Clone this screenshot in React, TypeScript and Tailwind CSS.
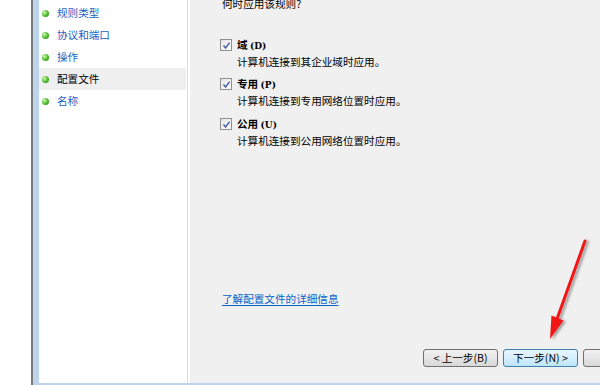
import React from 'react';

const cjk = "font-['Noto_Sans_CJK_SC',sans-serif]";

interface NavItemProps {
  label: string;
  active?: boolean;
}

const NavItem: React.FC<NavItemProps> = ({ label, active }) => {
  return (
    <div
      className={`flex h-[22px] items-center pl-[3px] mr-px ${
        active ? 'bg-[#efefef] text-black' : 'text-[#1c5fc4]'
      }`}
    >
      <span className="h-[7px] w-[7px] shrink-0 rounded-full bg-[radial-gradient(circle_at_35%_35%,#d4f8b0,#47b829_55%,#2e8c18)]" />
      <span className="ml-[8px] text-[10.6px] leading-none">{label}</span>
    </div>
  );
};

const CheckBox: React.FC = () => (
  <span className="flex h-[12px] w-[12px] shrink-0 items-center justify-center border border-[#8e8f8f] bg-gradient-to-br from-[#e4e4e4] to-[#ffffff]">
    <svg width="9" height="9" viewBox="0 0 9 9">
      <path d="M1.5 4.6 L3.6 7 L7.6 1.6" fill="none" stroke="#4d61a6" strokeWidth="1.5" />
    </svg>
  </span>
);

interface ProfileOptionProps {
  title: string;
  hint: string;
  desc: string;
  className?: string;
}

const ProfileOption: React.FC<ProfileOptionProps> = ({ title, hint, desc, className }) => (
  <div className={className}>
    <div className="flex h-[14px] items-center">
      <CheckBox />
      <span className="ml-[5px] text-[10.6px] font-bold leading-none">
        {title} <span className="font-['DejaVu_Serif',serif] text-[9px]">({hint})</span>
      </span>
    </div>
    <div className="mt-[3px] h-[14px] pl-[17px] text-[10.6px] leading-[14px]">{desc}</div>
  </div>
);

const WizardButton: React.FC<{ label: string; primary?: boolean }> = ({ label, primary }) => (
  <div
    className={`flex h-[18px] w-[75px] shrink-0 items-center justify-center rounded-[3px] border text-[10.6px] leading-none ${
      primary
        ? 'border-[#3c7fb1] bg-gradient-to-b from-[#eaf6fd] to-[#bee6fd]'
        : 'border-[#707070] bg-gradient-to-b from-[#f2f2f2] to-[#d8d8d8]'
    }`}
  >
    {label}
  </div>
);

const App: React.FC = () => {
  return (
    <div className={`relative flex h-[385px] w-[600px] overflow-hidden bg-white text-black ${cjk}`}>
      <div className="w-[31px] shrink-0" />
      <div className="flex flex-1 border-l-2 border-[#7a7a7a]">
        <div className="flex flex-1 border-b-2 border-l-[6px] border-[#bcd4ec]">
          <div className="w-[149px] shrink-0 border-r border-[#dcdcdc] bg-white pt-[2px]">
            <NavItem label="规则类型" />
            <NavItem label="协议和端口" />
            <NavItem label="操作" />
            <NavItem label="配置文件" active />
            <NavItem label="名称" />
          </div>
          <div className="w-[2px] shrink-0 bg-white" />
          <div className="flex flex-1 flex-col overflow-hidden bg-[#f0f0f0]">
            <div className="-mt-[3px] ml-[32px] h-[14px] text-[10.6px] leading-[14px]">何时应用该规则?</div>
            <div className="ml-[30px]">
              <ProfileOption className="mt-[27px]" title="域" hint="D" desc="计算机连接到其企业域时应用。" />
              <ProfileOption className="mt-[8px]" title="专用" hint="P" desc="计算机连接到专用网络位置时应用。" />
              <ProfileOption className="mt-[9px]" title="公用" hint="U" desc="计算机连接到公用网络位置时应用。" />
            </div>
            <div className="flex-1" />
            <div className="ml-[32px] h-[14px] text-[10.6px] leading-[14px]">
              <span className="text-[#0a63c9] underline underline-offset-2">了解配置文件的详细信息</span>
            </div>
            <div className="mb-[16px] mt-[43px] flex gap-[5px] pl-[233px]">
              <WizardButton label="< 上一步(B)" />
              <WizardButton label="下一步(N) >" primary />
              <WizardButton label="取消" />
            </div>
          </div>
        </div>
      </div>

      <svg className="pointer-events-none absolute left-0 top-0" width="600" height="385">
        <defs>
          <filter id="sh" x="-50%" y="-50%" width="200%" height="200%">
            <feDropShadow dx="2.5" dy="1" stdDeviation="1.2" floodColor="#000" floodOpacity="0.35" />
          </filter>
        </defs>
        <g filter="url(#sh)">
          <line x1="585" y1="241" x2="557" y2="319" stroke="#f01818" strokeWidth="3" strokeLinecap="round" />
          <polygon points="550,339 551.5,315.5 563.5,320.5" fill="#f01818" />
        </g>
      </svg>
    </div>
  );
};

export default App;
